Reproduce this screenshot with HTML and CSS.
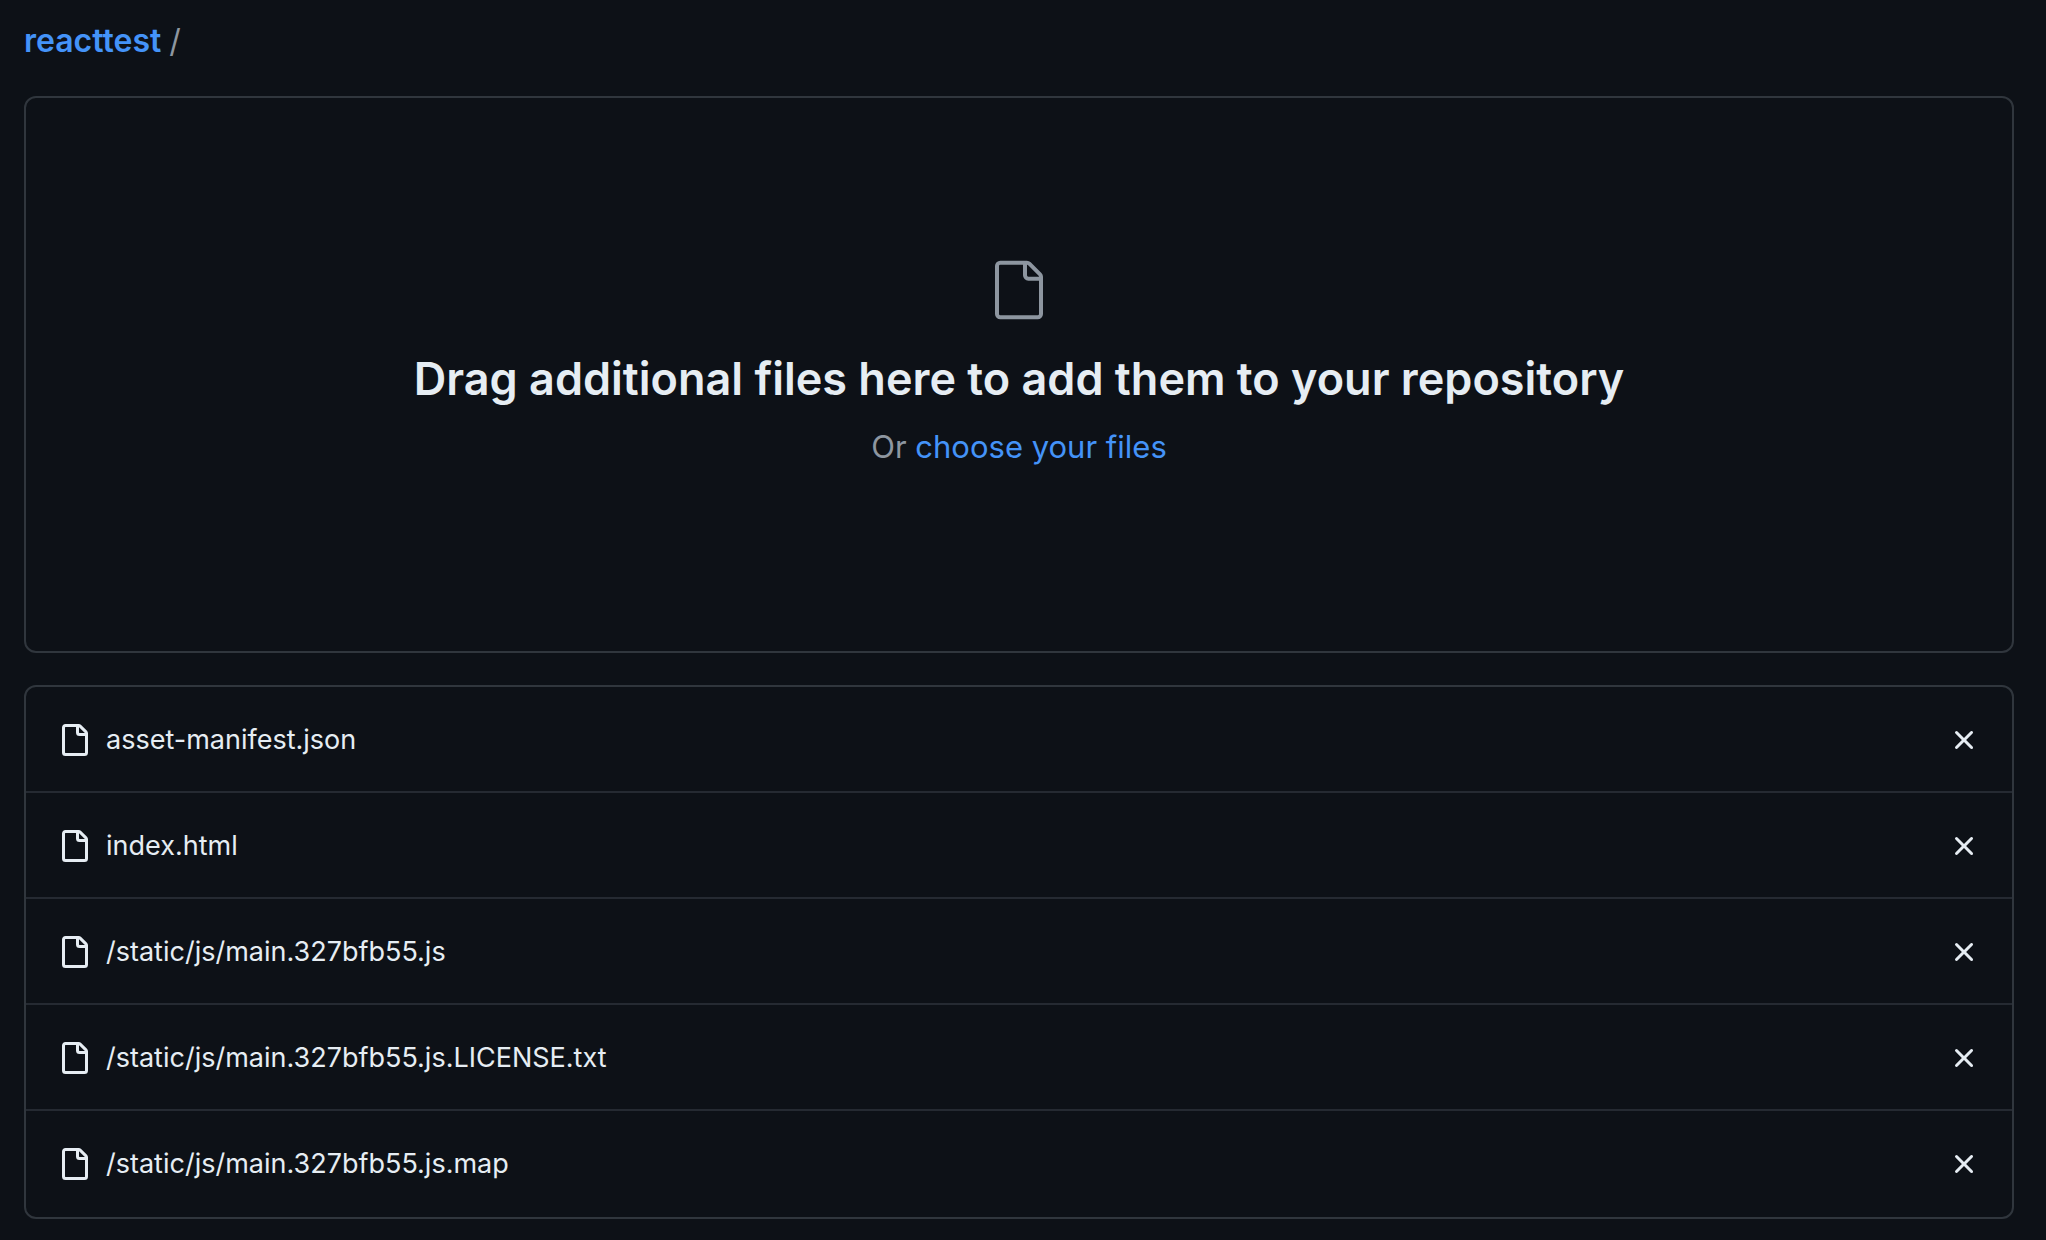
FILE: index.html
```html
<!DOCTYPE html>
<html lang="en">
<head>
<meta charset="utf-8">
<meta name="viewport" content="width=device-width, initial-scale=1">
<title>Upload files</title>
<link rel="stylesheet" href="styles.css">
</head>
<body>
<svg class="sprite" aria-hidden="true">
  <symbol id="file" viewBox="0 0 16 16"><path d="M2 1.75C2 .784 2.784 0 3.75 0h6.586c.464 0 .909.184 1.237.513l2.914 2.914c.329.328.513.773.513 1.237v9.586A1.75 1.75 0 0 1 13.25 16h-9.5A1.75 1.75 0 0 1 2 14.25Zm1.75-.25a.25.25 0 0 0-.25.25v12.5c0 .138.112.25.25.25h9.5a.25.25 0 0 0 .25-.25V6h-2.75A1.75 1.75 0 0 1 9 4.25V1.5Zm6.75.062V4.25c0 .138.112.25.25.25h2.688l-.011-.013-2.914-2.914-.013-.011Z"/></symbol>
  <symbol id="file-large" viewBox="0 0 24 24"><path d="M3 3a2 2 0 0 1 2-2h9.982a2 2 0 0 1 1.414.586l4.018 4.018A2 2 0 0 1 21 7.018V21a2 2 0 0 1-2 2H5a2 2 0 0 1-2-2V3Zm2-.5a.5.5 0 0 0-.5.5v18a.5.5 0 0 0 .5.5h14a.5.5 0 0 0 .5-.5V8.5h-4a2 2 0 0 1-2-2v-4Zm10 0v4a.5.5 0 0 0 .5.5h4a.5.5 0 0 0-.146-.336l-4.018-4.018A.5.5 0 0 0 15 2.5Z"/></symbol>
  <symbol id="x" viewBox="0 0 16 16"><path d="M3.72 3.72a.75.75 0 0 1 1.06 0L8 6.94l3.22-3.22a.749.749 0 0 1 1.275.326.749.749 0 0 1-.215.734L9.06 8l3.22 3.22a.749.749 0 0 1-.326 1.275.749.749 0 0 1-.734-.215L8 9.06l-3.22 3.22a.751.751 0 0 1-1.042-.018.751.751 0 0 1-.018-1.042L6.94 8 3.72 4.78a.75.75 0 0 1 0-1.06Z"/></symbol>
</svg>
<main class="page">
  <nav class="breadcrumb" aria-label="Breadcrumb"><a class="link repo" href="#">reacttest</a><span class="separator">/</span></nav>
  <section class="dropzone">
    <svg class="drop-icon" aria-hidden="true"><use href="#file-large"/></svg>
    <h1 class="drop-title">Drag additional files here to add them to your repository</h1>
    <p class="drop-hint">Or <a class="link" href="#">choose your files</a></p>
  </section>
  <ul class="files">
    <li class="file"><svg class="icon" aria-hidden="true"><use href="#file"/></svg><span class="name">asset-manifest.json</span><button class="remove" type="button" aria-label="Remove asset-manifest.json"><svg class="icon" aria-hidden="true"><use href="#x"/></svg></button></li>
    <li class="file"><svg class="icon" aria-hidden="true"><use href="#file"/></svg><span class="name">index.html</span><button class="remove" type="button" aria-label="Remove index.html"><svg class="icon" aria-hidden="true"><use href="#x"/></svg></button></li>
    <li class="file"><svg class="icon" aria-hidden="true"><use href="#file"/></svg><span class="name">/static/js/main.327bfb55.js</span><button class="remove" type="button" aria-label="Remove main.327bfb55.js"><svg class="icon" aria-hidden="true"><use href="#x"/></svg></button></li>
    <li class="file"><svg class="icon" aria-hidden="true"><use href="#file"/></svg><span class="name">/static/js/main.327bfb55.js.LICENSE.txt</span><button class="remove" type="button" aria-label="Remove main.327bfb55.js.LICENSE.txt"><svg class="icon" aria-hidden="true"><use href="#x"/></svg></button></li>
    <li class="file"><svg class="icon" aria-hidden="true"><use href="#file"/></svg><span class="name">/static/js/main.327bfb55.js.map</span><button class="remove" type="button" aria-label="Remove main.327bfb55.js.map"><svg class="icon" aria-hidden="true"><use href="#x"/></svg></button></li>
  </ul>
</main>
</body>
</html>
```
FILE: styles.css
```css
* {
  box-sizing: border-box;
}

body {
  margin: 0;
  background: #0d1117;
  color: #e6edf3;
  font-family: Inter, "Liberation Sans", sans-serif;
  font-size: 27px;
  font-variant-ligatures: none;
  line-height: 42px;
}

.sprite {
  position: absolute;
  width: 0;
  height: 0;
}

.page {
  padding: 20px 32px 20px 24px;
}

.link {
  color: #4493f8;
  text-decoration: none;
}

.breadcrumb {
  display: flex;
  gap: 8px;
  margin-bottom: 34px;
  font-size: 32px;
}

.repo {
  font-weight: 600;
}

.separator,
.drop-hint {
  color: #8d96a0;
}

.dropzone {
  display: flex;
  flex-direction: column;
  align-items: center;
  padding: 160px 32px 180px;
  border: 2px solid #30363d;
  border-radius: 12px;
  text-align: center;
}

.drop-icon {
  width: 64px;
  height: 64px;
  fill: #8d96a0;
}

.drop-title {
  margin: 21px 0 8px;
  font-size: 45px;
  font-weight: 600;
  line-height: 72px;
}

.drop-hint {
  margin: 0;
  font-size: 31px;
  line-height: 48px;
}

.files {
  margin: 32px 0 0;
  padding: 0;
  border: 2px solid #30363d;
  border-radius: 12px;
  list-style: none;
}

.file {
  display: flex;
  align-items: center;
  padding: 32px;
}

.file:not(:last-child) {
  padding-bottom: 30px;
  border-bottom: 2px solid #252a32;
}

.icon {
  display: block;
  flex: none;
  width: 32px;
  height: 32px;
  fill: currentColor;
}

.name {
  flex: 1;
  margin-left: 16px;
}

.remove {
  padding: 0;
  border: 0;
  background: none;
  color: inherit;
}
```
